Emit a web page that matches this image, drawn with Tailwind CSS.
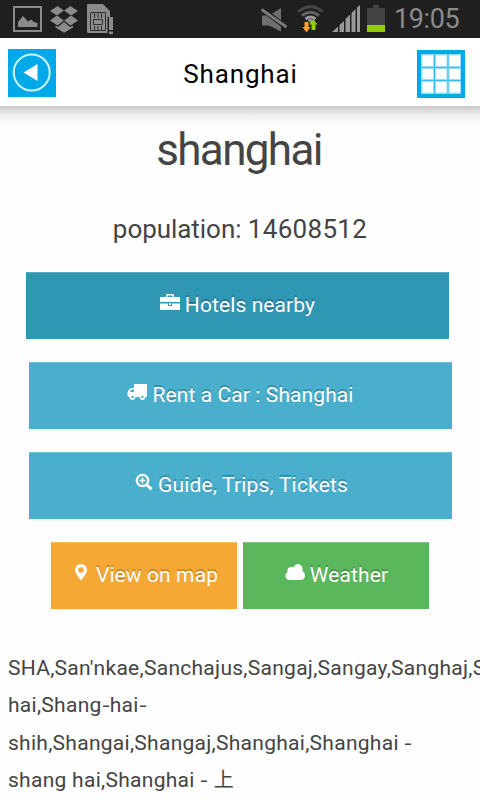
<!DOCTYPE html>
<html lang="en">
<head>
<meta charset="utf-8">
<meta name="viewport" content="width=device-width">
<title>Shanghai</title>
<script src="https://cdn.jsdelivr.net/npm/@tailwindcss/browser@4"></script>
</head>
<body class="w-[480px] h-[800px] overflow-hidden bg-[#fefefe] font-['Roboto','Noto_Sans_CJK_SC',sans-serif] text-[#444]">
<div class="flex h-[38px] w-full bg-[#1f1f1f]">
  <svg class="block h-[38px] w-[390px] shrink-0" viewBox="0 0 390 38">
    <g fill="#8b8b8b">
      <path fill-rule="evenodd" d="M13 6H42V32H13ZM15 8V30H40V8Z"/>
      <path d="M18 27V22L23 16L28 21.500L31 19.500L34 22L37.500 23V27Z"/>
      <path d="M57.500 6L64 10.500L57 15.500L50 11ZM70.500 6L78 11L71 15.500L64 10.500ZM57 15.500L64 20.500L57.500 25.500L50 20.500ZM71 15.500L78 20.500L70.500 25.500L64 20.500Z"/>
      <path d="M64 22L70 27L73 25.500V27.500L64 32.700L55.500 27.500V25.500L58 27Z"/>
      <path d="M87 5Q87 4 88 4H103L110 11V17H107.500V33H88Q87 33 87 32Z"/>
      <path d="M109 17H113V30H109ZM109 31.500H113V34H109Z"/>
    </g>
    <path fill="none" stroke="#303030" stroke-width="1" d="M90.500 12.500H105.500V30.500H90.500ZM93.500 19.500H102.500V24.500H93.500ZM94.500 13V18M98 13V18M101.500 13V18M94.500 26V30M98 26V30M101.500 26V30"/>
    <path fill="#6f6f6f" d="M262 15.500H269L281 8V31.500L269 25.500H262Z"/>
    <path stroke="#1f1f1f" stroke-width="5" d="M262 9L287 28"/>
    <path stroke="#7b7b7b" stroke-width="2.800" d="M261.500 9.500L286.500 27"/>
    <g fill="none">
      <path stroke="#474747" stroke-width="3" d="M298.500 11.500Q310.500 2 322.500 11.500"/>
      <path stroke="#646464" stroke-width="3" d="M302 15.500Q310.500 9 319 15.500"/>
      <path stroke="#999" stroke-width="3" d="M305.500 19Q310.500 15 315.500 19"/>
    </g>
    <path fill="#999" d="M307.500 20Q310.500 18 313.500 20L310.500 23Z"/>
    <path fill="#ffa033" d="M304.500 22H308.500V27H310.500L306.500 32.500L302.500 27H304.500Z"/>
    <path fill="#92cf00" d="M311.500 30V24.500H309L313.500 19.500L317.500 24.500H315.500V30Z"/>
    <path fill="#999" d="M332 32L338 26.500V32ZM339.500 25L344 21V32H339.500ZM345.500 19L350 14.500V32H345.500ZM351.500 13L355.500 9V32H351.500ZM357 7.500L360 5V32H357Z"/>
    <path fill="#444" d="M373 5H379V8H385V25H367V8H373Z"/>
    <path fill="#92cf00" d="M367 25H385V32H367Z"/>
  </svg>
  <span class="block pl-[4px] text-[27px] leading-[38px] tracking-[-0.4px] text-[#8b8b8b]">19:05</span>
</div>
<header class="flex h-[70px] items-start border-b-2 border-[#cfcfcf] bg-white px-2">
  <svg class="mt-[11px] block size-12 shrink-0" viewBox="0 0 48 48">
    <path fill="#00a9e8" d="M0 0H48V48H0Z"/>
    <circle cx="23.700" cy="23.500" r="18" fill="none" stroke="#d3f2ff" stroke-width="2"/>
    <path fill="#fff" d="M15.500 23.500L29.500 15V32Z"/>
  </svg>
  <h1 class="grow pl-[8px] text-center text-[26px] leading-[72px] tracking-[0.85px] text-black">Shanghai</h1>
  <svg class="mt-[12px] mr-[7px] block size-12 shrink-0" viewBox="0 0 48 48">
    <path fill="#00a9e8" d="M0 0H48V48H0Z"/>
    <path fill="#9cddf8" d="M4 4H44V44H4Z"/>
    <path fill="#fff" d="M5.500 5.500H16V16H5.500ZM19 5.500H29.500V16H19ZM32.500 5.500H43V16H32.500ZM5.500 19H16V29H5.500ZM19 19H29.500V29H19ZM32.500 19H43V29H32.500ZM5.500 32H16V42.500H5.500ZM19 32H29.500V42.500H19ZM32.500 32H43V42.500H32.500Z"/>
    <path fill="none" stroke="#3bbdef" d="M17.500 4V44M31 4V44M4 17.500H44M4 30.500H44"/>
  </svg>
</header>
<div class="h-[16px] bg-linear-to-b from-[#d2d2d2] via-[#f1f1f1] to-[#fefefe]"></div>
<main>
  <h2 class="h-[52px] pr-[2px] text-center text-[44px] leading-[52px] tracking-[-1.65px]">shanghai</h2>
  <p class="mt-[37px] h-8 text-center text-[26px] leading-8"><span class="tracking-[-0.05px]">population: </span><span class="tracking-[0.3px]">14608512</span></p>
  <div class="mt-[27px] flex flex-col gap-[23px] text-[21px] tracking-[0.1px] text-white [text-shadow:0_-2px_0_rgba(0,0,0,0.22)]">
    <a class="ml-[26px] flex h-[67px] w-[423px] items-center justify-center gap-[5px] bg-[#2f96b4] shadow-[inset_0_1px_0_rgba(255,255,255,0.2),0_1px_2px_rgba(0,0,0,0.05)]">
      <svg class="mb-[7px] block h-[18px] w-5" viewBox="0 0 20 18"><path fill="#fff" fill-rule="evenodd" d="M1 4H6V2Q6 1 7 1H13Q14 1 14 2V4H19Q20 4 20 5V9H0V5Q0 4 1 4ZM7.500 2.500V4H12.500V2.500ZM0 10.500H8V13H12V10.500H20V16Q20 17 19 17H1Q0 17 0 16ZM9 10H11V12H9Z"/></svg>
      <span>Hotels nearby</span>
    </a>
    <a class="ml-[29px] flex h-[67px] w-[423px] items-center justify-center gap-[5px] bg-[#49afcd] shadow-[inset_0_1px_0_rgba(255,255,255,0.2),0_1px_2px_rgba(0,0,0,0.05)]">
      <svg class="mb-[7px] block h-[18px] w-5" viewBox="0 0 20 18"><path fill="#fff" fill-rule="evenodd" d="M8 1H19Q20 1 20 2V13Q20 14 18.500 14Q18 17 15.500 17Q13 17 12.500 14H8.500Q8 17 5.500 17Q3 17 2.500 14Q0.500 14 0.500 12.500V10Q0.500 8 3 5.500Q4 5 7 5V2Q7 1 8 1ZM3 9H7V6.500H5Q3.500 7 3 9ZM4.500 14A1.200 1.200 0 1 0 6.900 14A1.200 1.200 0 1 0 4.500 14ZM14.200 14A1.200 1.200 0 1 0 16.600 14A1.200 1.200 0 1 0 14.200 14Z"/></svg>
      <span>Rent a Car : Shanghai</span>
    </a>
    <a class="ml-[29px] flex h-[67px] w-[423px] items-center justify-center gap-[5px] bg-[#49afcd] pl-[2px] shadow-[inset_0_1px_0_rgba(255,255,255,0.2),0_1px_2px_rgba(0,0,0,0.05)]">
      <svg class="mb-[7px] block h-[18px] w-[18px]" viewBox="0 0 18 18"><circle cx="7.500" cy="7.500" r="5.700" fill="none" stroke="#fff" stroke-width="2.300"/><path fill="none" stroke="#fff" stroke-width="1.500" d="M4.500 7.500H10.500M7.500 4.500V10.500"/><path stroke="#fff" stroke-width="3" d="M11.500 11.500L16.500 16.300"/></svg>
      <span class="tracking-[0.18px]">Guide, Trips, Tickets</span>
    </a>
    <div class="flex gap-[6px] pl-[51px]">
      <a class="flex h-[67px] w-[186px] items-center justify-center gap-[5px] bg-[#f6a834] shadow-[inset_0_1px_0_rgba(255,255,255,0.2),0_1px_2px_rgba(0,0,0,0.05)]">
        <svg class="mb-[7px] block h-[18px] w-5" viewBox="0 0 20 18"><path fill="#fff" fill-rule="evenodd" d="M11 17.500Q5 10 5 7A6 6 0 0 1 17 7Q17 10 11 17.500ZM8.200 7A2.800 2.800 0 1 0 13.800 7A2.800 2.800 0 1 0 8.200 7Z"/></svg>
        <span class="pl-px">View on map</span>
      </a>
      <a class="flex h-[67px] w-[186px] items-center justify-center gap-[5px] bg-[#5bb75b] pl-px shadow-[inset_0_1px_0_rgba(255,255,255,0.2),0_1px_2px_rgba(0,0,0,0.05)]">
        <svg class="mb-[7px] block h-[18px] w-5" viewBox="0 0 20 18"><path fill="#fff" d="M4.500 17A4.300 4.300 0 0 1 2.500 9Q2 4 6.500 4Q8 4 8.500 4.500Q10 1 13 1Q18 1.500 17.500 8Q20 9.500 20 12.500Q20 16.500 16 17Z"/></svg>
        <span>Weather</span>
      </a>
    </div>
  </div>
  <p class="mt-[40.5px] overflow-hidden pl-2 text-[21px] leading-[37.500px] tracking-[0.28px] whitespace-nowrap">SHA,San'nkae,Sanchajus,Sangaj,Sangay,Sanghaj,S<br>hai,Shang<span class="inline-block scale-x-120 px-[1px]">-</span>hai<span class="inline-block scale-x-120 px-[1px]">-</span><br>shih,Shangai,Shangaj,Shanghai,Shanghai <span class="inline-block scale-x-120 px-[1px]">-</span><br>shang hai,Shanghai <span class="inline-block scale-x-120 px-[1px]">-</span> <span class="text-[20px] leading-none">上</span></p>
</main>
</body>
</html>
